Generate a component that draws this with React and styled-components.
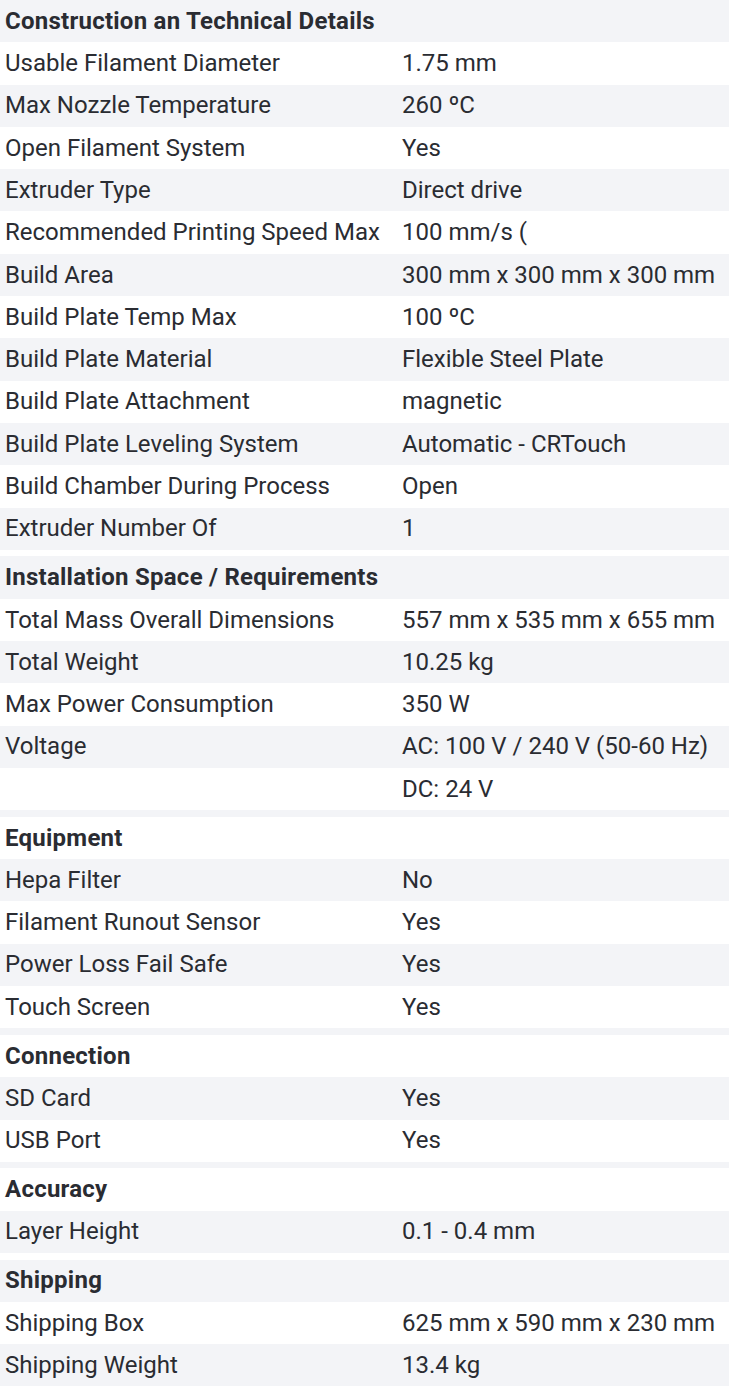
import React from "react";
import styled, { createGlobalStyle } from "styled-components";

const GlobalStyle = createGlobalStyle`
  body {
    margin: 0;
    background: #fff;
    font-family: Roboto, "Noto Sans", sans-serif;
    color: #2a2c32;
  }
`;

const SpecTable = styled.table`
  width: 729px;
  border-collapse: collapse;
  font-size: 24px;
  tr:nth-child(odd) {
    background: #f3f4f7;
  }
`;

const Row = styled.tr`
  height: 42.3px;
`;

const Spacer = styled.tr`
  height: 6.6px;
  td {
    padding: 0;
  }
`;

const Cell = styled.td`
  padding: 0 5px;
  vertical-align: middle;
  white-space: nowrap;
  line-height: 1.2;
  &:first-child {
    width: 387px;
  }
`;

const HeadCell = styled.th`
  padding: 0 5px;
  text-align: left;
  font-weight: 700;
  letter-spacing: 0.25px;
  line-height: 1.2;
`;

const sections = [
  {
    title: "Construction an Technical Details",
    rows: [
      ["Usable Filament Diameter", "1.75 mm"],
      ["Max Nozzle Temperature", "260 ºC"],
      ["Open Filament System", "Yes"],
      ["Extruder Type", "Direct drive"],
      ["Recommended Printing Speed Max", "100 mm/s ("],
      ["Build Area", "300 mm x 300 mm x 300 mm"],
      ["Build Plate Temp Max", "100 ºC"],
      ["Build Plate Material", "Flexible Steel Plate"],
      ["Build Plate Attachment", "magnetic"],
      ["Build Plate Leveling System", "Automatic - CRTouch"],
      ["Build Chamber During Process", "Open"],
      ["Extruder Number Of", "1"],
    ],
  },
  {
    title: "Installation Space / Requirements",
    rows: [
      ["Total Mass Overall Dimensions", "557 mm x 535 mm x 655 mm"],
      ["Total Weight", "10.25 kg"],
      ["Max Power Consumption", "350 W"],
      ["Voltage", "AC: 100 V / 240 V (50-60 Hz)"],
      ["", "DC: 24 V"],
    ],
  },
  {
    title: "Equipment",
    rows: [
      ["Hepa Filter", "No"],
      ["Filament Runout Sensor", "Yes"],
      ["Power Loss Fail Safe", "Yes"],
      ["Touch Screen", "Yes"],
    ],
  },
  {
    title: "Connection",
    rows: [
      ["SD Card", "Yes"],
      ["USB Port", "Yes"],
    ],
  },
  {
    title: "Accuracy",
    rows: [["Layer Height", "0.1 - 0.4 mm"]],
  },
  {
    title: "Shipping",
    rows: [
      ["Shipping Box", "625 mm x 590 mm x 230 mm"],
      ["Shipping Weight", "13.4 kg"],
    ],
  },
];

export default function App() {
  return (
    <>
      <GlobalStyle />
      <SpecTable>
        <tbody>
          {sections.map((section, i) => (
            <React.Fragment key={section.title}>
              {i > 0 && (
                <Spacer>
                  <td colSpan={2} />
                </Spacer>
              )}
              <Row>
                <HeadCell colSpan={2}>{section.title}</HeadCell>
              </Row>
              {section.rows.map(([label, value], j) => (
                <Row key={j}>
                  <Cell>{label}</Cell>
                  <Cell>{value}</Cell>
                </Row>
              ))}
            </React.Fragment>
          ))}
        </tbody>
      </SpecTable>
    </>
  );
}
